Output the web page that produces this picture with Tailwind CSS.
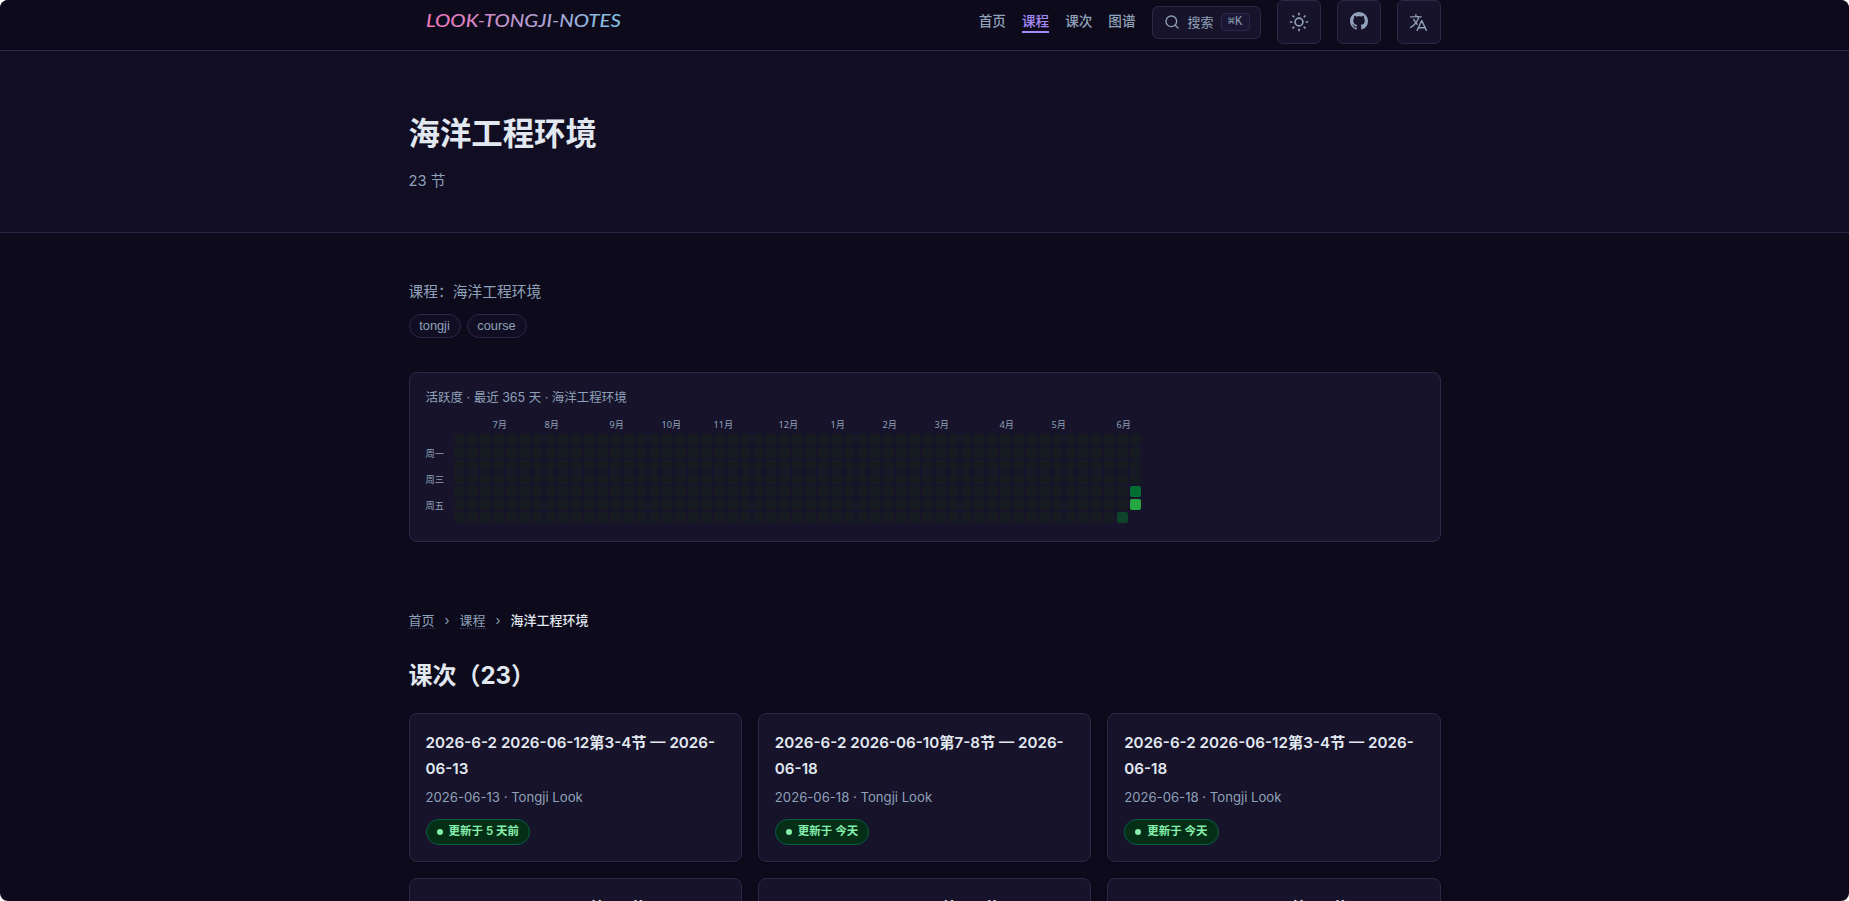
<!DOCTYPE html>
<html lang="zh-CN" class="bg-white">
<head>
    <meta charset="UTF-8">
    <meta name="viewport" content="width=device-width, initial-scale=1.0">
    <title>海洋工程环境 - LOOK-TONGJI-NOTES</title>
    <script src="https://cdn.jsdelivr.net/npm/@tailwindcss/browser@4"></script>
    <style>
        body {
            font-family: 'Inter', 'Noto Sans CJK SC', sans-serif;
        }
    </style>
</head>
<body class="bg-[#0c0a1b] text-slate-200 h-screen overflow-clip rounded-lg">
    <!-- Navbar -->
    <header class="h-[51px] border-b border-[#2d2847] bg-[#0c0a1b] rounded-t-lg">
        <div class="w-[1032px] mx-auto h-[44px] flex items-center justify-between">
            <a href="#" class="block pl-[17px]">
                <svg width="200" height="36" viewBox="0 0 200 36">
                    <defs>
                        <linearGradient id="brand" x1="0" y1="8" x2="195" y2="36" gradientUnits="userSpaceOnUse">
                            <stop offset="0" stop-color="#f472b6"/>
                            <stop offset="1" stop-color="#7dc4e4"/>
                        </linearGradient>
                    </defs>
                    <text x="0" y="23" textLength="195" lengthAdjust="spacingAndGlyphs" font-family="Lato" font-style="italic" font-weight="500" font-size="18" fill="url(#brand)">LOOK-TONGJI-NOTES</text>
                </svg>
            </a>
            <div class="flex items-center gap-4">
                <nav class="flex gap-4 mb-[1px] text-[13.6px] leading-[21px] font-medium text-slate-400">
                    <a href="#">首页</a>
                    <a href="#" class="text-[#a78bfa] border-b-2 border-[#a78bfa] h-[22px]">课程</a>
                    <a href="#">课次</a>
                    <a href="#">图谱</a>
                </nav>
                <button class="flex items-center w-[109px] h-[33px] pl-[11px] rounded-md border border-[#2d2847] bg-[#16132a] text-slate-400 text-[13px]">
                    <svg class="w-4 h-4" viewBox="0 0 24 24" fill="none" stroke="currentColor" stroke-width="2" stroke-linecap="round"><circle cx="11" cy="11" r="8"/><path d="m21 21-4.3-4.3"/></svg>
                    <span class="ml-[8px] mt-[2px]">搜索</span>
                    <kbd class="ml-[7px] flex items-center justify-center w-[29px] h-[18px] rounded border border-[#2d2847] bg-[#1a1633] font-['Liberation_Mono','DejaVu_Sans_Mono',monospace] text-xs">⌘K</kbd>
                </button>
                <button class="w-11 h-11 flex items-center justify-center rounded-md border border-[#2d2847] bg-[#16132a] text-slate-400">
                    <svg class="w-5 h-5" viewBox="0 0 24 24" fill="none" stroke="currentColor" stroke-width="2"><circle cx="12" cy="12" r="4.7"/><path d="M12 1v3M12 20v3M1 12h3M20 12h3M4.2 4.2l2.1 2.1M17.7 17.7l2.1 2.1M4.2 19.8l2.1-2.1M17.7 6.3l2.1-2.1"/></svg>
                </button>
                <button class="w-11 h-11 pb-[2px] flex items-center justify-center rounded-md border border-[#2d2847] bg-[#16132a] text-slate-400">
                    <svg class="w-[18px] h-[18px]" viewBox="0 0 16 16" fill="currentColor"><path d="M8 0C3.58 0 0 3.58 0 8c0 3.54 2.29 6.53 5.47 7.59.4.07.55-.17.55-.38 0-.19-.01-.82-.01-1.49-2.01.37-2.53-.49-2.69-.94-.09-.23-.48-.94-.82-1.13-.28-.15-.68-.52-.01-.53.63-.01 1.08.58 1.23.82.72 1.21 1.87.87 2.33.66.07-.52.28-.87.51-1.07-1.78-.2-3.64-.89-3.64-3.95 0-.87.31-1.59.82-2.15-.08-.2-.36-1.02.08-2.12 0 0 .67-.21 2.2.82.64-.18 1.32-.27 2-.27s1.36.09 2 .27c1.53-1.04 2.2-.82 2.2-.82.44 1.1.16 1.92.08 2.12.51.56.82 1.27.82 2.15 0 3.07-1.87 3.75-3.65 3.95.29.25.54.73.54 1.48 0 1.07-.01 1.93-.01 2.2 0 .21.15.46.55.38A8.01 8.01 0 0 0 16 8c0-4.42-3.58-8-8-8z"/></svg>
                </button>
                <button class="w-11 h-11 flex items-center justify-center rounded-md border border-[#2d2847] bg-[#16132a] text-slate-400">
                    <svg class="w-[21px] h-[21px]" viewBox="0 0 24 24" fill="none" stroke="currentColor" stroke-width="1.6" stroke-linecap="round" stroke-linejoin="round"><path d="m10.5 21 5.25-11.25L21 21m-9-3h7.5M3 5.621a48.474 48.474 0 0 1 6-.371m0 0c1.12 0 2.233.038 3.334.114M9 5.25V3m3.334 2.364C11.176 10.658 7.69 15.08 3 17.502m9.334-12.138c.896.061 1.785.147 2.666.257m-4.589 8.495a18.023 18.023 0 0 1-3.827-5.802"/></svg>
                </button>
            </div>
        </div>
    </header>

    <!-- Hero -->
    <section class="h-[182px] border-b border-[#2d2847] bg-[#110e23]">
        <div class="w-[1032px] mx-auto pt-[62px]">
            <h1 class="text-[31.4px] leading-[42px] font-bold">海洋工程环境</h1>
            <p class="mt-[14px] text-[14.7px] leading-6 text-slate-400">23 节</p>
        </div>
    </section>

    <main class="w-[1032px] mx-auto pt-[47px]">
        <p class="text-[14.75px] leading-6 text-slate-400">课程：海洋工程环境</p>
        <div class="mt-[10px] flex gap-[6px] font-['Liberation_Sans',sans-serif] text-[12.8px] leading-[22px] text-slate-400">
            <span class="w-[52px] text-center rounded-full border border-[#2d2847] bg-[#110e23]">tongji</span>
            <span class="w-[60px] text-center rounded-full border border-[#2d2847] bg-[#110e23]">course</span>
        </div>

        <!-- Activity -->
        <section class="mt-[34px] h-[170px] px-4 pt-[15px] rounded-lg border border-[#2d2847] bg-[#16132a] text-slate-400">
            <div class="text-[12.5px] leading-5">活跃度 · 最近 365 天 · 海洋工程环境</div>
            <div id="months" class="mt-[10px] ml-[28px] h-[13px] grid grid-cols-[repeat(53,11px)] gap-[2px] font-['Noto_Sans','Noto_Sans_CJK_SC',sans-serif] text-[9.2px] leading-[13px] whitespace-nowrap"></div>
            <div class="mt-[3px] flex">
                <div class="w-[28px] grid grid-rows-[repeat(7,11px)] gap-[2px] text-[9.2px] leading-[13px]">
                    <span></span><span>周一</span><span></span><span>周三</span><span></span><span>周五</span><span></span>
                </div>
                <div id="days" class="grid grid-flow-col grid-rows-[repeat(7,11px)] auto-cols-[11px] gap-[2px]"></div>
            </div>
        </section>

        <!-- Breadcrumb -->
        <nav class="mt-[68px] flex items-center text-[13px] leading-5 text-slate-400">
            <a href="#" class="h-[18px] leading-[19px] border-b border-dotted border-[#3d3761]">首页</a>
            <span class="mx-[10px]">›</span>
            <a href="#" class="h-[18px] leading-[19px] border-b border-dotted border-[#3d3761]">课程</a>
            <span class="mx-[10px]">›</span>
            <span class="font-medium text-slate-200">海洋工程环境</span>
        </nav>

        <h2 class="mt-[28px] text-2xl leading-9 font-bold">课次（23）</h2>
        <div id="lessons" class="mt-[19px] grid grid-cols-3 gap-4"></div>
    </main>

    <script>
        const months = [[3, '7月'], [7, '8月'], [12, '9月'], [16, '10月'], [20, '11月'], [25, '12月'], [29, '1月'], [33, '2月'], [37, '3月'], [42, '4月'], [46, '5月'], [51, '6月']];
        document.getElementById('months').innerHTML = months.map(([col, name]) => `
            <span style="grid-column: ${col + 1}; grid-row: 1">${name}</span>
        `).join('');

        // 52 full weeks plus the current one, which ends on Friday
        const active = { 363: 'bg-[#0e4429]', 368: 'bg-[#006d32]', 369: 'bg-[#26a641]' };
        let days = '';
        for (let i = 0; i < 370; i++) {
            days += `<i class="rounded-[2px] ${active[i] || 'bg-[#161b22]'}"></i>`;
        }
        document.getElementById('days').innerHTML = days;

        const lessons = [
            ['2026-6-2 2026-06-12第3-4节 — 2026-06-13', '2026-06-13', '5 天前'],
            ['2026-6-2 2026-06-10第7-8节 — 2026-06-18', '2026-06-18', '今天'],
            ['2026-6-2 2026-06-12第3-4节 — 2026-06-18', '2026-06-18', '今天'],
            ['2026-6-2 2026-06-10第7-8节 — 2026-06-13', '2026-06-13', '5 天前'],
            ['2026-6-2 2026-06-05第3-4节 — 2026-06-13', '2026-06-13', '5 天前'],
            ['2026-6-2 2026-06-03第7-8节 — 2026-06-13', '2026-06-13', '5 天前']
        ];
        document.getElementById('lessons').innerHTML = lessons.map(([title, date, updated]) => `
            <article class="h-[149px] px-4 pt-4 rounded-lg border border-[#2d2847] bg-[#16132a] shadow-sm">
                <h3 class="text-[15.2px] leading-[26px] font-semibold">${title}</h3>
                <p class="mt-[4px] text-[13.15px] leading-[22px] text-slate-400">${date} · Tongji Look</p>
                <span class="mt-[11px] inline-flex items-center h-[26px] px-[10px] rounded-full border border-[#065f46] bg-[#052e16] text-[11.5px] font-semibold text-[#86efac]">
                    <i class="w-[6px] h-[6px] mr-[6px] rounded-full bg-[#86efac]"></i>更新于 ${updated}
                </span>
            </article>
        `).join('');
    </script>
</body>
</html>
